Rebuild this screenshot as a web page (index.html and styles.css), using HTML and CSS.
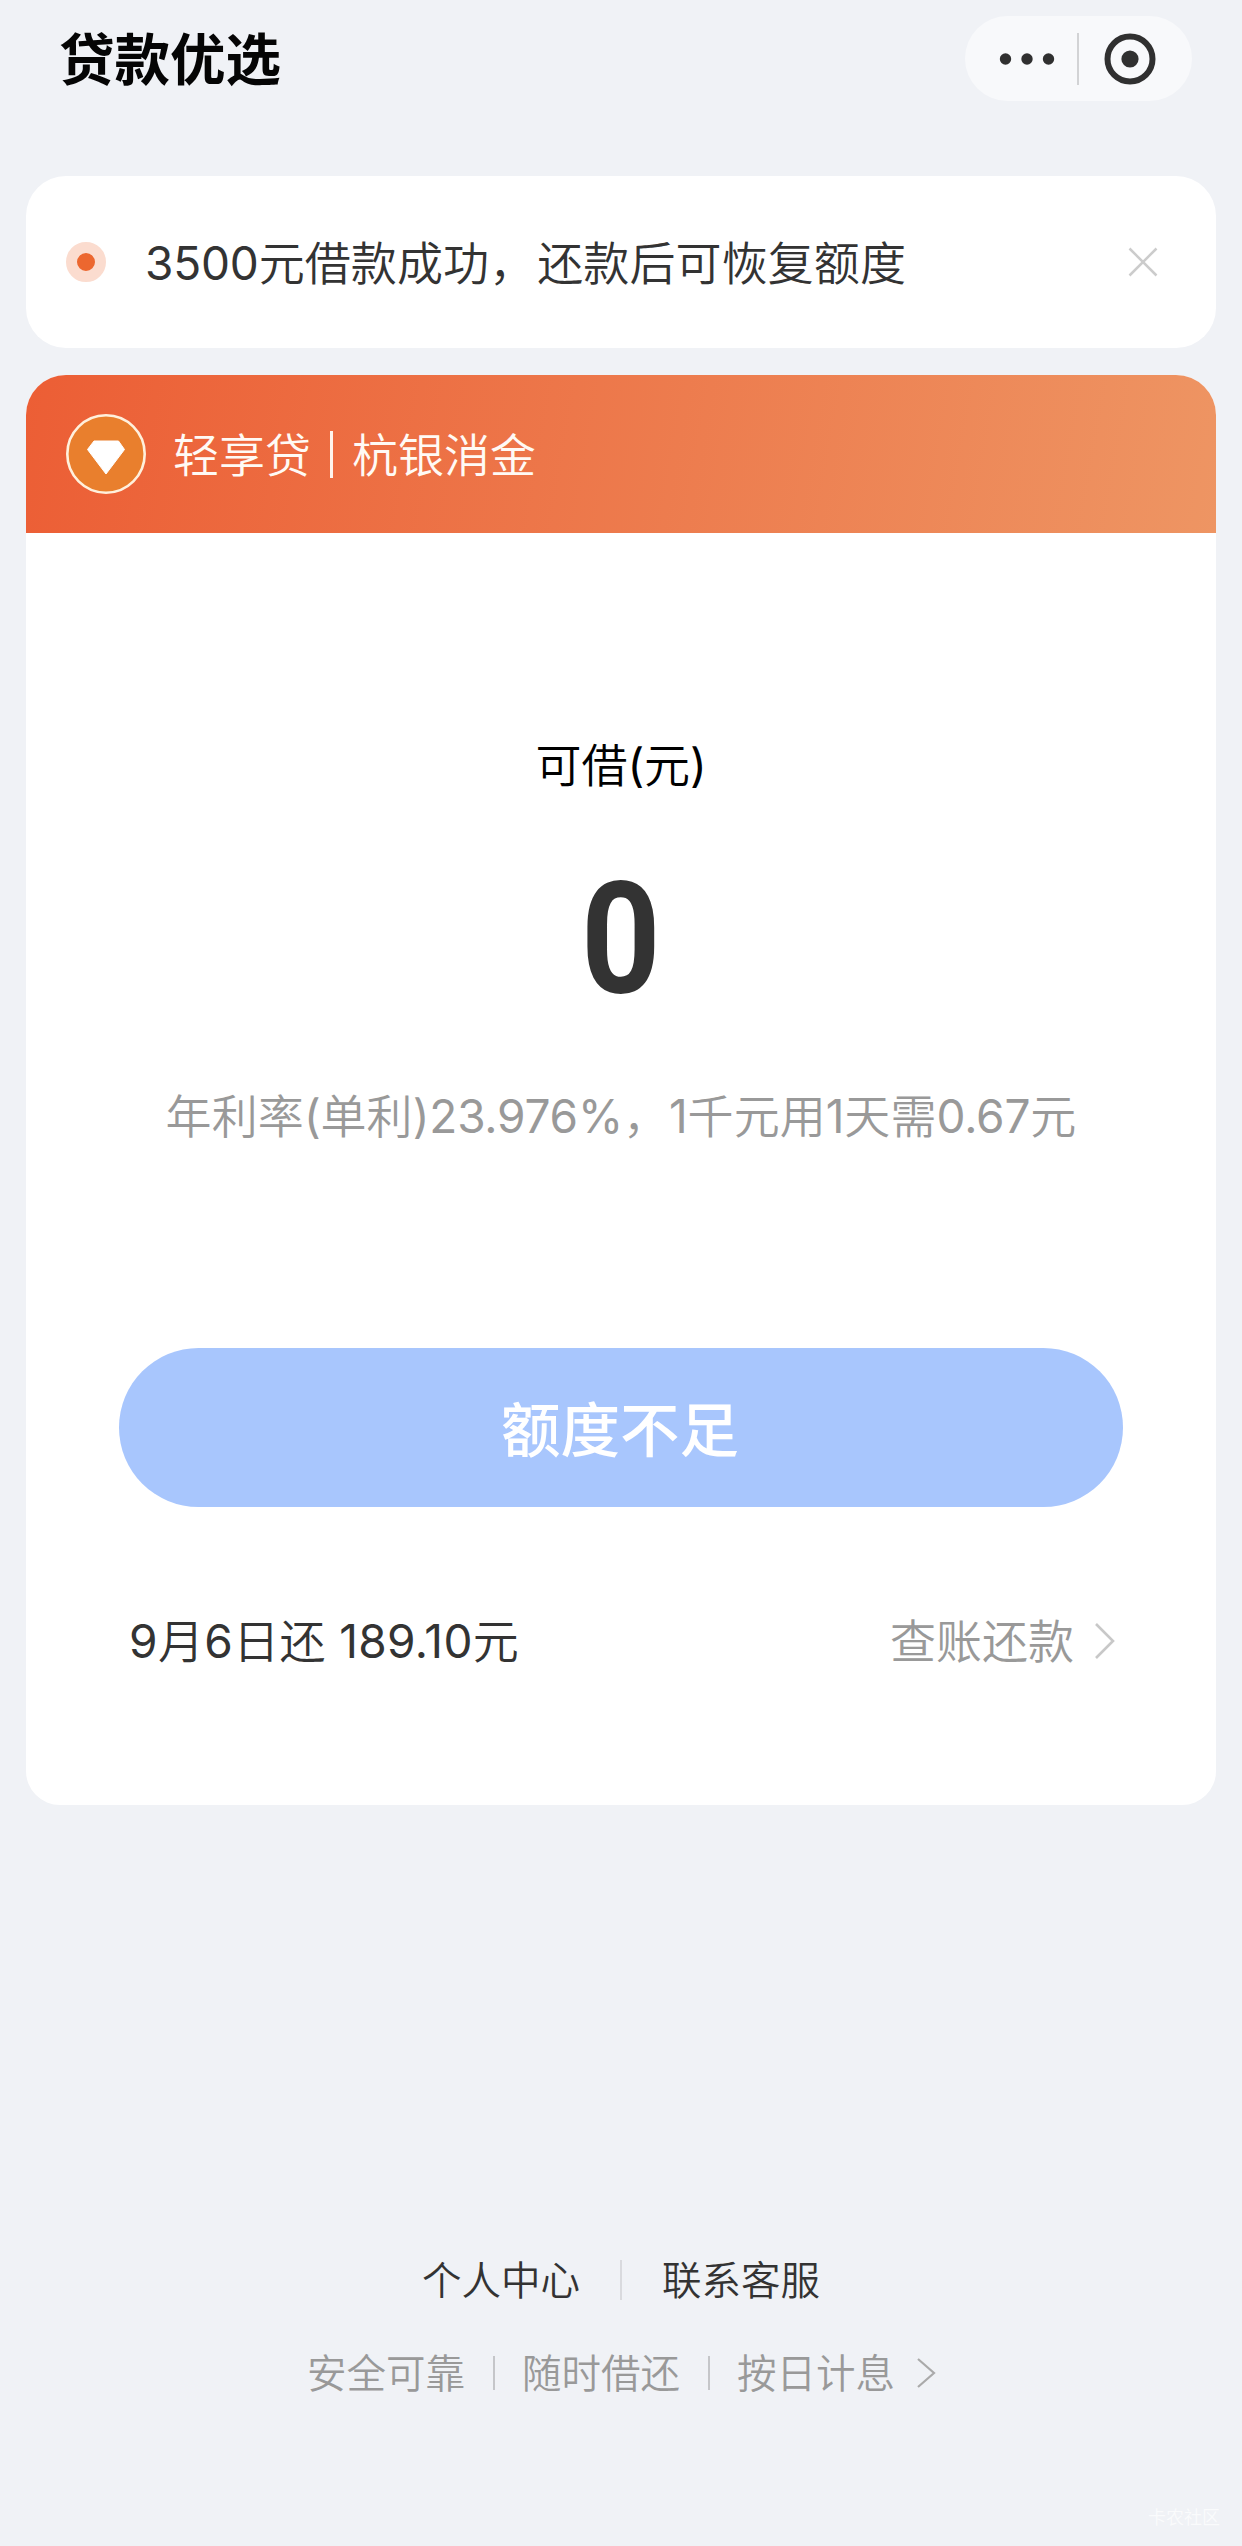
FILE: index.html
```html
<!DOCTYPE html>
<html lang="zh-CN">
<head>
<meta charset="utf-8">
<title>贷款优选</title>
<link rel="stylesheet" href="styles.css">
</head>
<body>
<div class="page">
  <header class="navbar">
    <h1 class="title">贷款优选</h1>
    <div class="capsule">
      <svg class="more" width="56" height="16" viewBox="0 0 56 16"><circle cx="6.5" cy="8" r="5.7"/><circle cx="28" cy="8" r="5.7"/><circle cx="49.5" cy="8" r="5.7"/></svg>
      <span class="capsule-line"></span>
      <svg class="target" width="52" height="52" viewBox="0 0 52 52"><circle class="ring" cx="26" cy="26" r="22.5"/><circle cx="26" cy="26" r="8.6"/></svg>
    </div>
  </header>

  <section class="notice">
    <span class="dot"></span>
    <p class="notice-text"><span class="num">3500</span>元借款成功<span class="comma">，</span>还款后可恢复额度</p>
    <svg class="close" width="30" height="30" viewBox="0 0 30 30"><path d="M1.5 1.5 28.5 28.5M28.5 1.5 1.5 28.5"/></svg>
  </section>

  <main class="card">
    <div class="brand">
      <svg class="logo" width="80" height="80" viewBox="0 0 80 80"><circle cx="40" cy="40" r="38.7"/><path d="M28 27H52.500L58.500 35.500 40 60 21.500 35.500Z"/></svg>
      <span class="brand-name">轻享贷</span>
      <span class="brand-line"></span>
      <span class="brand-name">杭银消金</span>
    </div>
    <div class="content">
      <p class="label">可借<span class="num">(</span>元<span class="num">)</span></p>
      <p class="amount">0</p>
      <p class="rate">年利率<span class="num">(</span>单利<span class="num">)23.976%</span>，<span class="num">1</span>千元用<span class="num">1</span>天需<span class="num">0.67</span>元</p>
      <button class="submit">额度不足</button>
      <div class="bill">
        <span class="due"><span class="num">9</span>月<span class="num">6</span>日还<span class="num"> 189.10</span>元</span>
        <a class="repay"><span>查账还款</span><svg width="22" height="38" viewBox="0 0 22 38"><path d="M2 2 19 19 2 36"/></svg></a>
      </div>
    </div>
  </main>

  <footer class="footer">
    <nav class="links"><span>个人中心</span><i></i><span>联系客服</span></nav>
    <div class="promises"><span>安全可靠</span><i></i><span>随时借还</span><i></i><span>按日计息</span><svg width="20" height="32" viewBox="0 0 20 32"><path d="M2 2 18 16 2 30"/></svg></div>
  </footer>
  <div class="watermark">卡农社区</div>
</div>
</body>
</html>
```
FILE: styles.css
```css
* { box-sizing: border-box; margin: 0; padding: 0; }
body {
  background: #f0f2f6;
  color: #333;
  font-family: "Noto Sans CJK SC", sans-serif;
  font-size: 46px;
  font-weight: 350;
  white-space: nowrap;
}
.page {
  position: relative;
  width: 1242px;
  height: 2546px;
  padding: 16px 26px 0;
  overflow: hidden;
}
.num {
  font-family: Inter, sans-serif;
  font-weight: 400;
  line-height: 0;
  letter-spacing: -.2px;
}
.comma { margin-right: 2px; }
.navbar {
  display: flex;
  align-items: center;
  justify-content: space-between;
  height: 85px;
  padding: 0 24px 0 33px;
}
.title {
  padding-bottom: 5px;
  color: #050505;
  font-size: 55.500px;
  font-weight: 700;
  line-height: 80px;
}
.capsule {
  display: flex;
  align-items: center;
  width: 227px;
  height: 85px;
  padding-left: 34px;
  border-radius: 43px;
  background: #f8f9fb;
  fill: #303030;
}
.capsule-line {
  width: 2px;
  height: 52px;
  margin: 0 25px 0 22px;
  background: #d2d3d5;
}
.ring { fill: none; stroke: #303030; stroke-width: 6; }
.notice {
  display: flex;
  align-items: center;
  height: 172px;
  margin-top: 75px;
  padding: 0 58px 0 40px;
  border-radius: 40px;
  background: #fff;
}
.dot {
  width: 40px;
  height: 40px;
  border: 11px solid #fbdccf;
  border-radius: 50%;
  background: #ec672f;
}
.notice-text { margin-left: 39px; padding-bottom: 5px; letter-spacing: .1px; }
.close { margin-left: auto; fill: none; stroke: #ccc; stroke-width: 2.500; }
.card {
  height: 1430px;
  margin-top: 27px;
  border-radius: 40px 40px 34px 34px;
  background: #fff;
  overflow: hidden;
}
.brand {
  display: flex;
  align-items: center;
  height: 158px;
  padding-left: 40px;
  background: linear-gradient(100deg, #ec5e35, #ee9563);
  color: #fffaf5;
}
.brand-name { padding-bottom: 4px; }
.logo { margin-right: 27px; }
.logo circle { fill: #e97f2d; stroke: #fff0dc; stroke-width: 2.600; }
.logo path { fill: #fff; stroke: #fff; stroke-width: 1; stroke-linejoin: round; }
.brand-line {
  width: 3px;
  height: 47px;
  margin: 0 19px;
  background: #fff4ec;
}
.content {
  display: flex;
  flex-direction: column;
  align-items: center;
  padding: 196px 93px 0;
}
.label { color: #000; line-height: 66px; }
.amount {
  margin-top: 68px;
  color: #333;
  font-family: Roboto, sans-serif;
  font-size: 156px;
  font-weight: 700;
  line-height: 152px;
  transform: scaleX(.89);
}
.rate { margin-top: 65px; color: #999; line-height: 66px; letter-spacing: .1px; }
.submit {
  width: 1004px;
  height: 159px;
  margin-top: 202px;
  padding: 0 2px 3px 0;
  border: 0;
  border-radius: 80px;
  background: #a8c6fd;
  color: #fff;
  font: 500 59.500px/88px "Noto Sans CJK SC", sans-serif;
}
.bill {
  display: flex;
  align-items: center;
  justify-content: space-between;
  width: 100%;
  height: 66px;
  margin-top: 101px;
  padding: 0 7px 0 10px;
}
.due, .repay span { padding-bottom: 6px; }
.due, .due .num { letter-spacing: .35px; }
.repay { display: flex; align-items: center; color: #999; }
.repay svg { margin-left: 20px; fill: none; stroke: #c8c8c8; stroke-width: 2.600; }
.footer {
  display: flex;
  flex-direction: column;
  align-items: center;
  padding-top: 445px;
  font-size: 39.500px;
}
.footer span { padding-bottom: 6px; }
.links, .promises {
  display: flex;
  align-items: center;
  height: 60px;
}
.links i { width: 2px; height: 40px; margin: 0 40px; background: #d9dade; }
.promises { margin-top: 33px; padding-left: 1px; color: #999; }
.promises i { width: 2px; height: 34px; margin: 0 27px 0 28px; background: #c5c6c9; }
.promises svg { margin-left: 21px; fill: none; stroke: #aaa; stroke-width: 2.200; }
.watermark {
  position: absolute;
  right: 22px;
  bottom: 17px;
  color: #fafbfc;
  font-size: 18px;
  line-height: 26px;
}
```
